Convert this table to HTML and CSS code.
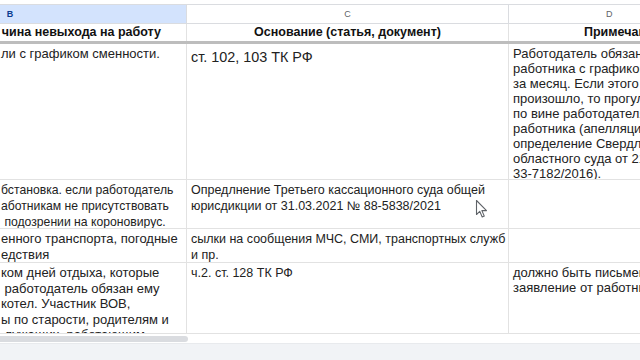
FILE: index.html
```html
<!DOCTYPE html>
<html lang="ru">
<head>
<meta charset="utf-8">
<title>Таблица</title>
<link rel="stylesheet" href="styles.css">
</head>
<body>
<div class="sheet">
  <div class="topstrip"></div>
  <div class="row colheads">
    <div class="ch ch-sel">B</div>
    <div class="ch">C</div>
    <div class="ch ch-d"><span class="letter-d">D</span></div>
  </div>
  <div class="row hdr">
    <div class="cell hb">чина невыхода на работу</div>
    <div class="cell hc">Основание (статья, документ)</div>
    <div class="cell hd">Примечание</div>
  </div>
  <div class="row r2">
    <div class="cell cb">ли с графиком сменности.</div>
    <div class="cell cc big">ст. 102, 103 ТК РФ</div>
    <div class="cell cd">Работодатель обязан ознакомить<br>работника с графиком сменности<br>за месяц. Если этого не<br>произошло, то прогул не<br>по вине работодателя, а не<br>работника (апелляционное<br>определение Свердловского<br>областного суда от 21.02.2017<br>33-7182/2016).</div>
  </div>
  <div class="row r3">
    <div class="cell cb small">бстановка. если работодатель<br>аботникам не присутствовать<br>&nbsp;подозрении на короновирус.</div>
    <div class="cell cc">Опредлнение Третьего кассационного суда общей<br>юрисдикции от 31.03.2021 № 88-5838/2021</div>
    <div class="cell cd"></div>
  </div>
  <div class="row r4">
    <div class="cell cb">енного транспорта, погодные<br>едствия</div>
    <div class="cell cc">сылки на сообщения МЧС, СМИ, транспортных служб<br>и пр.</div>
    <div class="cell cd"></div>
  </div>
  <div class="row r5">
    <div class="cell cb">ком дней отдыха, которые<br>&nbsp;работодатель обязан ему<br>котел. Участник ВОВ,<br>ы по старости, родителям и<br>&nbsp;лужащих, работающим</div>
    <div class="cell cc">ч.2. ст. 128 ТК РФ</div>
    <div class="cell cd">должно быть письменное<br>заявление от работника</div>
  </div>
  <div class="hscroll"><div class="thumb"></div></div>
  <div class="footer"></div>
</div>
<svg class="cursor" width="14" height="20" viewBox="0 0 14 20" aria-hidden="true">
  <path d="M1.5 1.5 L1.5 15.5 L4.8 12.4 L7.2 18 L9.3 17.1 L6.9 11.6 L11.5 11.6 Z" fill="#fff" stroke="#5f6368" stroke-width="1.1" stroke-linejoin="round"/>
</svg>
</body>
</html>
```
FILE: styles.css
```css
html, body {
  margin: 0;
  padding: 0;
  width: 640px;
  height: 360px;
  overflow: hidden;
  background: #fff;
  font-family: "Liberation Sans", Arial, sans-serif;
  color: #222;
}

.sheet {
  margin-left: -166px;
  width: 900px;
  display: flex;
  flex-direction: column;
  height: 360px;
}

.topstrip {
  height: 5px;
  box-sizing: border-box;
  border-bottom: 1px solid #dadce0;
  background: #fff;
}

.row {
  display: grid;
  grid-template-columns: 353px 322px 225px;
  box-sizing: border-box;
  border-bottom: 1px solid #e2e2e2;
}

.cell {
  box-sizing: border-box;
  border-right: 1px solid #e2e2e2;
  overflow: hidden;
  white-space: nowrap;
  font-size: 13px;
  line-height: 15.5px;
  padding: 2px 4px 0 4px;
}

.colheads {
  height: 19px;
  border-bottom: 1px solid #dadce0;
}

.ch {
  box-sizing: border-box;
  border-right: 1px solid #dadce0;
  font-size: 9px;
  line-height: 18px;
  color: #5f6368;
  text-align: center;
  background: #fff;
}

.ch-sel {
  background: #d3e3fd;
  color: #0b3d91;
  font-weight: bold;
}

.colheads .ch-d {
  text-align: left;
  padding-left: 0;
}

.letter-d {
  display: inline-block;
  margin-left: 97px;
}

.hdr {
  height: 20px;
  border-bottom: 3px solid #bdbdbd;
}

.hdr .cell {
  font-weight: bold;
  font-size: 12.5px;
  color: #111;
  text-align: center;
  padding: 0 4px;
  line-height: 17px;
}

.hdr .hb {
  text-align: right;
  padding-right: 25px;
}

.hdr .hd {
  text-align: left;
  padding-left: 75px;
}

.r2 { height: 136px; }
.r3 { height: 49px; }
.r4 { height: 34px; }
.r5 { height: 71px; }

.cb {
  padding-left: 167px;
}

.cb.small {
  font-size: 12.2px;
  line-height: 16px;
}

.cc {
  font-size: 12.5px;
  line-height: 16px;
}

.cc.big {
  font-size: 14.4px;
  line-height: 18px;
  padding-top: 4px;
}

.cd {
  line-height: 15px;
}

.hscroll {
  height: 10px;
  box-sizing: border-box;
  border-bottom: 1px solid #e8eaed;
  padding: 2px 0 0 166px;
  background: #fff;
}

.thumb {
  width: 188px;
  height: 6px;
  background: #dadce0;
  border-radius: 0 3px 3px 0;
}

.footer {
  flex: 1;
  background: #f1f3f6;
}

.cursor {
  position: absolute;
  left: 475px;
  top: 199px;
}
```
